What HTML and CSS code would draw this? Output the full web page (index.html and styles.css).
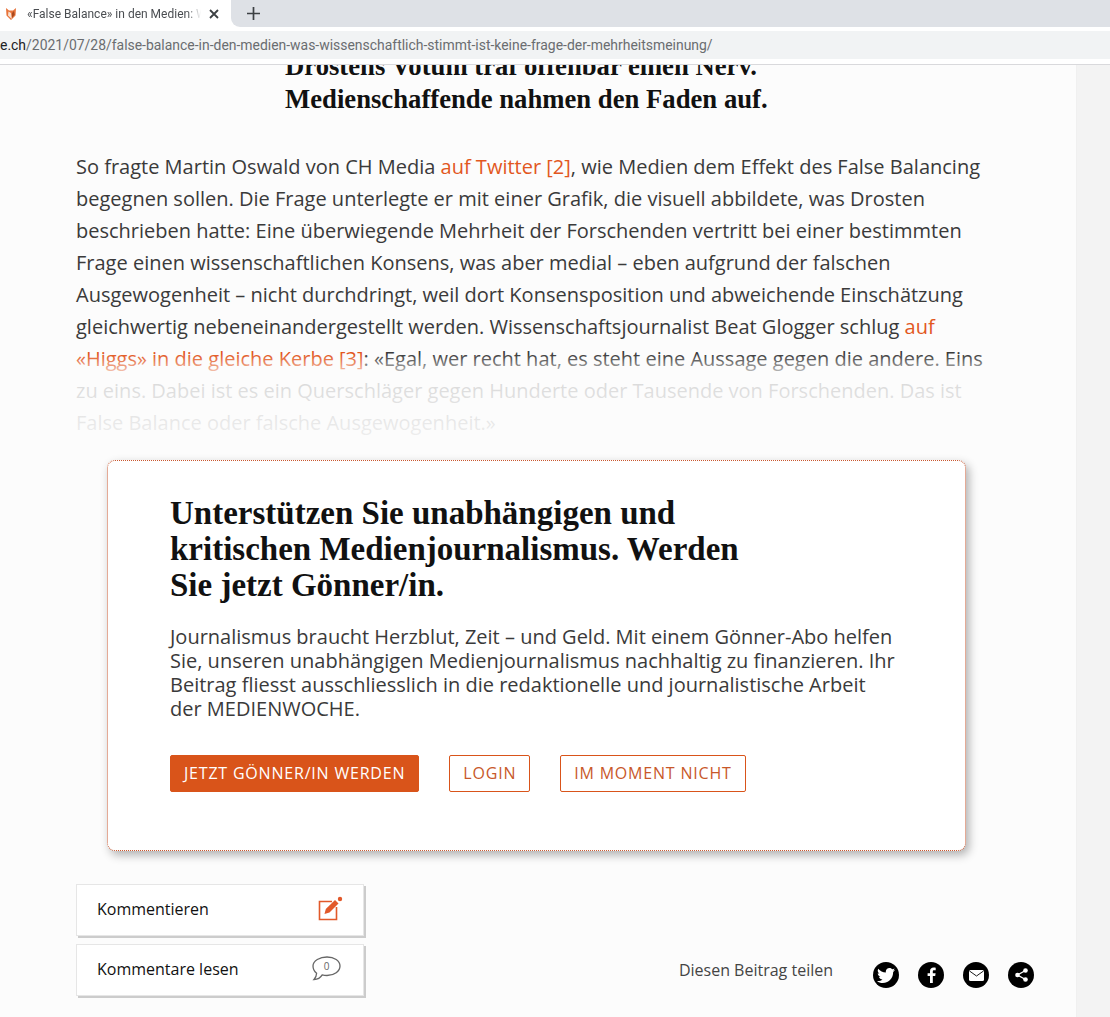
FILE: index.html
```html
<!DOCTYPE html>
<html lang="de">
<head>
<meta charset="utf-8">
<title>False Balance in den Medien</title>
<link rel="stylesheet" href="styles.css">
</head>
<body>
<header class="chrome">
  <div class="tabbar">
    <div class="tab">
      <svg class="favicon" width="12" height="14" viewBox="0 0 12 14"><path d="M1 1l3 2.500h4L11 1l-.5 7.500L6 13 1.500 8.500z" fill="#e8743b"/><path d="M3.500 4.500L6 6l.8 6L3 8.500z" fill="#f8e2d2"/><path d="M7 6l2-2 .6 3.500L7 11z" fill="#a8491f"/></svg>
      <span class="tab-title">«False Balance» in den Medien: Was wissenschaftlich</span>
      <svg class="tab-close" width="10" height="10" viewBox="0 0 10 10"><path d="M1 1l8 8M9 1l-8 8" stroke="#3c4043" stroke-width="1.800"/></svg>
    </div>
    <div class="tab-rest">
      <svg class="tab-new" width="13" height="13" viewBox="0 0 13 13"><path d="M6.500 0v13M0 6.500h13" stroke="#3c4043" stroke-width="1.700"/></svg>
    </div>
  </div>
  <div class="addressrow">
    <div class="addressbar"><span class="url-host">e.ch</span>/2021/07/28/false-balance-in-den-medien-was-wissenschaftlich-stimmt-ist-keine-frage-der-mehrheitsmeinung/</div>
  </div>
</header>
<div class="viewport">
  <main class="page">
    <h2 class="pullquote">Drostens Votum traf offenbar einen Nerv.<br>Medienschaffende nahmen den Faden auf.</h2>
    <div class="article">
      <p>So fragte Martin Oswald von CH Media <a href="#">auf Twitter [2]</a>, wie Medien dem Effekt des False Balancing begegnen sollen. Die Frage unterlegte er mit einer Grafik, die visuell abbildete, was Drosten beschrieben hatte: Eine überwiegende Mehrheit der Forschenden vertritt bei einer bestimmten Frage einen wissenschaftlichen Konsens, was aber medial – eben aufgrund der falschen Ausgewogenheit – nicht durchdringt, weil dort Konsensposition und abweichende Einschätzung gleichwertig nebeneinandergestellt werden. Wissenschaftsjournalist Beat Glogger schlug <a href="#">auf «Higgs» in die gleiche Kerbe [3]</a>: «Egal, wer recht hat, es steht eine Aussage gegen die andere. Eins zu eins. Dabei ist es ein Querschläger gegen Hunderte oder Tausende von Forschenden. Das ist False Balance oder falsche Ausgewogenheit.»</p>
      <div class="fade"></div>
    </div>
    <section class="paywall">
      <h2>Unterstützen Sie unabhängigen und<br>kritischen Medienjournalismus. Werden<br>Sie jetzt Gönner/in.</h2>
      <p>Journalismus braucht Herzblut, Zeit – und Geld. Mit einem Gönner-Abo helfen<br>Sie, unseren unabhängigen Medienjournalismus nachhaltig zu finanzieren. Ihr<br>Beitrag fliesst ausschliesslich in die redaktionelle und journalistische Arbeit<br>der MEDIENWOCHE.</p>
      <div class="actions">
        <a class="btn btn-primary" href="#">JETZT GÖNNER/IN WERDEN</a>
        <a class="btn" href="#">LOGIN</a>
        <a class="btn" href="#">IM MOMENT NICHT</a>
      </div>
    </section>
    <footer class="foot">
      <div class="comments">
        <a class="cbtn" href="#"><span>Kommentieren</span>
          <svg class="edit" width="25" height="25" viewBox="0 0 25 25" fill="none"><path d="M14 5.500H1.500v18h17V11" stroke="#e2592a" stroke-width="1.600"/><path d="M6.500 18l1.300-5L17 4l3.500 3.500-9 9z" fill="#e2592a"/><circle cx="22" cy="3" r="2.200" fill="#e2592a"/></svg>
        </a>
        <a class="cbtn" href="#"><span>Kommentare lesen</span>
          <svg class="bubble" width="29" height="25" viewBox="0 0 29 25"><path d="M15 1c7.200 0 13 3.800 13 9s-5.800 9.500-13 9.500c-1.800 0-3.300-.2-4.800-.6C8.500 21.800 5.500 23.500 2 23.500c1.600-1.600 2.500-3.500 2.600-6.200C2.400 15.500 1 13 1 10 1 4.800 7.800 1 15 1z" fill="none" stroke="#666" stroke-width="1.300"/><text x="14.500" y="14" text-anchor="middle" class="bubble-num">0</text></svg>
        </a>
      </div>
      <div class="share">
        <span class="share-label">Diesen Beitrag teilen</span>
        <div class="share-icons">
          <a class="si" href="#"><svg width="18" height="15" viewBox="0 0 24 20"><path fill="#fff" d="M24 2.400c-.9.400-1.800.700-2.800.800 1-.6 1.800-1.600 2.200-2.700-1 .6-2 1-3.100 1.200C19.300.7 18 0 16.600 0c-2.700 0-4.900 2.200-4.900 4.900 0 .4 0 .8.100 1.100C7.700 5.800 4.100 3.900 1.700.9 1.200 1.600 1 2.500 1 3.400c0 1.700.9 3.200 2.200 4.100-.8 0-1.600-.2-2.200-.6v.1c0 2.400 1.700 4.400 3.900 4.800-.4.100-.8.200-1.300.2-.3 0-.6 0-.9-.1.600 2 2.400 3.400 4.600 3.400-1.700 1.300-3.800 2.100-6.100 2.100-.4 0-.8 0-1.200-.1C2.200 19.200 4.800 20 7.500 20c9.100 0 14-7.500 14-14v-.6c1-.7 1.800-1.600 2.500-3z"/></svg></a>
          <a class="si" href="#"><svg width="9" height="16" viewBox="0 0 9 16"><path fill="#fff" d="M5.800 16V9h2.400l.4-2.800H5.800V4.500c0-.8.200-1.300 1.400-1.300h1.500V.7C8.400.7 7.600.6 6.600.6 4.500.6 3 1.900 3 4.200v2H.6V9H3v7z"/></svg></a>
          <a class="si" href="#"><svg width="15" height="11" viewBox="0 0 15 11"><rect width="15" height="11" rx="1.500" fill="#fff"/><path d="M.5 1l7 5 7-5" fill="none" stroke="#000" stroke-width=".9"/></svg></a>
          <a class="si" href="#"><svg width="13" height="14" viewBox="0 0 13 14"><path d="M10.500 2.500L2.500 7l8 4.500" fill="none" stroke="#fff" stroke-width="1.400"/><circle cx="10.500" cy="2.500" r="2.300" fill="#fff"/><circle cx="2.500" cy="7" r="2.300" fill="#fff"/><circle cx="10.500" cy="11.500" r="2.300" fill="#fff"/></svg></a>
        </div>
      </div>
    </footer>
  </main>
  <div class="scrollbar"></div>
</div>
</body>
</html>
```
FILE: styles.css
```css
* { box-sizing: border-box; }
html, body { margin: 0; padding: 0; height: 100%; overflow: hidden; }
body { width: 1110px; height: 1017px; display: flex; flex-direction: column; background: #fcfcfc; font-family: "Open Sans", sans-serif; color: #333; }
a { text-decoration: none; color: inherit; }

.chrome { flex: none; height: 65px; background: #fff; border-bottom: 1px solid #d9d9dc; position: relative; z-index: 2; }
.tabbar { display: flex; height: 27px; background: #fff; }
.tab { width: 231px; display: flex; align-items: center; padding-left: 5px; background: #fff; font-family: Roboto, sans-serif; font-size: 12px; color: #4a4d51; }
.favicon { flex: none; margin-right: 10px; }
.tab-title { width: 174px; white-space: nowrap; overflow: hidden; -webkit-mask-image: linear-gradient(to right, #000 160px, transparent 174px); mask-image: linear-gradient(to right, #000 160px, transparent 174px); }
.tab-close { flex: none; margin-left: 8px; }
.tab-rest { flex: 1; background: #dee1e6; border-bottom-left-radius: 9px; padding-left: 16px; display: flex; align-items: center; }
.addressrow { padding-top: 4px; }
.addressbar { height: 28px; background: #f1f3f4; font-family: Roboto, sans-serif; font-size: 13.950px; line-height: 28px; color: #6a6d70; white-space: nowrap; overflow: hidden; }
.url-host { color: #202124; }

.viewport { flex: 1; display: flex; min-height: 0; overflow: hidden; }
.page { width: 1076px; flex: none; padding: 0 42px 0 76px; background: #fcfcfc; }
.scrollbar { flex: 1; background: #f3f3f3; border-left: 1px solid #f0f0f0; }

.pullquote { margin: -15px 0 0 209px; font-family: "Liberation Serif", serif; font-weight: 700; font-size: 26.700px; line-height: 33px; color: #111; white-space: nowrap; }

.article { position: relative; margin-top: 35px; width: 920px; }
.article p { margin: 0; font-size: 20px; line-height: 32px; color: #3a3a3a; }
.article a { color: #e2571e; }
.fade { position: absolute; left: 0; right: 0; top: 203px; height: 87px; background: linear-gradient(to bottom, rgba(252,252,252,0), rgba(252,252,252,.82) 26%, rgba(252,252,252,.93) 100%); }

.paywall { margin: 21px 0 0 31px; width: 859px; height: 391px; padding: 34px 62px 0; background: #fff; border: 1px dotted #c9572f; border-radius: 8px; box-shadow: 3px 4px 10px rgba(0,0,0,.3); }
.paywall h2 { margin: 0; font-family: "Liberation Serif", serif; font-weight: 700; font-size: 33px; line-height: 36px; color: #111; white-space: nowrap; }
.paywall p { margin: 22px 0 0; font-size: 20px; line-height: 24px; color: #3a3a3a; white-space: nowrap; }
.actions { display: flex; gap: 30px; margin-top: 34px; }
.btn { display: block; height: 37px; padding: 0 13px; border: 1px solid #d9541a; border-radius: 2px; color: #c8582a; font-size: 16px; line-height: 35px; letter-spacing: .8px; white-space: nowrap; }
.btn-primary { background: #d9541a; color: #fff; }

.foot { display: flex; justify-content: space-between; align-items: flex-end; margin-top: 33px; width: 958px; }
.comments { display: flex; flex-direction: column; gap: 8px; }
.cbtn { width: 288px; height: 52px; display: flex; align-items: center; justify-content: space-between; padding: 0 20px 2px; background: #fff; border: 1px solid #e6e6e6; box-shadow: 2px 2px 0 #ccc; font-size: 16px; color: #111; }
.edit { margin-top: -2px; }
.bubble { margin-right: 2px; margin-top: -2px; }
.bubble-num { font-family: "Open Sans", sans-serif; font-size: 10px; fill: #666; }
.share { display: flex; align-items: center; gap: 40px; margin-bottom: 8px; }
.share-label { font-size: 16px; color: #444; position: relative; top: -5px; }
.share-icons { display: flex; gap: 19px; }
.si { width: 26px; height: 26px; border-radius: 50%; background: #000; display: flex; align-items: center; justify-content: center; }
```
